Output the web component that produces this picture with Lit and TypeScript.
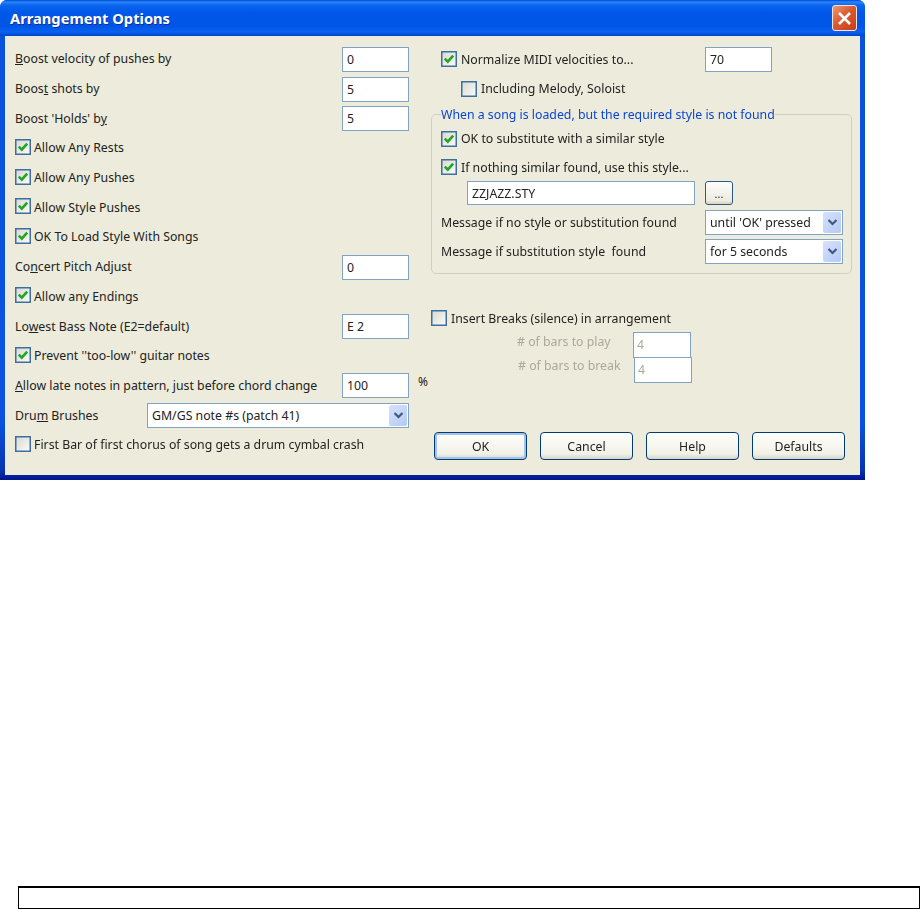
import { LitElement, html, css, svg } from "lit";
import { customElement } from "lit/decorators.js";

const check = svg`<path d="M3.8 7.6 L6.8 10.6 L12.2 4.6" fill="none" stroke="#21a621" stroke-width="2.6"/>`;

@customElement("app-root")
export class AppRoot extends LitElement {
  static styles = css`
    :host { display: block; width: 920px; height: 910px; background: #fff; overflow: hidden;
      font-family: "Noto Sans", sans-serif; font-size: 12.3px; color: #222; }
    .win { width: 865px; height: 480px; box-sizing: border-box; display: flex; flex-direction: column;
      border-radius: 7px 7px 0 0; overflow: hidden;
      background: linear-gradient(#0a52dc, #0a52e0 88%, #0834b0 98%, #00138c);
      filter: blur(0.3px); }
    .title { height: 36px; flex: none; display: flex; align-items: center; justify-content: space-between;
      padding: 0 8px 0 10px; box-sizing: border-box;
      background: linear-gradient(#0048d8 0, #2c86f5 2px, #0a66f0 5px, #0058e8 12px, #0055e5 26px, #0a62f2 32px, #0042c8 36px);
      color: #fff; font-weight: 700; font-size: 14.7px; text-shadow: 1px 1px 0 #0f2f9a; }
    .close { width: 25px; height: 26px; box-sizing: border-box; border: 1px solid #f0e6df; border-radius: 3px;
      background: linear-gradient(135deg, #ec9a76, #dc5a30 45%, #c83c18); display: flex; align-items: center; justify-content: center; }
    .close svg { display: block; }
    .body { flex: none; height: 439px; margin: 0 5px; box-sizing: border-box; background: #edecdc;
      display: flex; padding-top: 8px; }
    .left { width: 423px; flex: none; padding-left: 10px; box-sizing: border-box;
      display: grid; grid-auto-rows: 29.7px; align-content: start; }
    .right { flex: 1; display: flex; flex-direction: column; }
    .row { display: flex; align-items: center; white-space: pre; }
    .lab { width: 327px; flex: none; }
    .lab.drum { width: 132px; }
    .cb { width: 16px; height: 16px; flex: none; box-sizing: border-box; margin: 0 3px 2px 0; display: block; }
    .right .cb { margin: 0 4px 0 0; }
    input { box-sizing: border-box; height: 25px; border: 1px solid #82a3c4; background: #fff; padding: 0 4px;
      font: inherit; color: #222; margin: 0; outline: none; display: block; }
    input.num { width: 67px; margin-top: 1px; }
    .pct { margin-left: 9px; font-size: 12px; margin-top: -8px; }
    .combo { box-sizing: border-box; height: 25px; border: 1px solid #82a3c4; background: #fff; display: flex;
      align-items: center; justify-content: space-between; padding: 0 1px 0 4px; }
    .combo .arrow { width: 18px; height: 21px; border-radius: 2px; display: flex; align-items: center; justify-content: center;
      background: linear-gradient(135deg, #d6e2fb, #b4c9f5); }
    .combo.wide { width: 262px; }
    .combo.small { width: 138px; }
    .r1 { height: 30px; padding-left: 13px; }
    .r1 .lab { width: 244px; }
    .r2 { height: 29px; padding-left: 33px; }
    fieldset { margin: 2px 11px 0 3px; padding: 1px 8px 0 9px; border: 1px solid #d0d0bf; border-radius: 5px;
      height: 169px; box-sizing: border-box; min-width: 0; }
    legend { padding: 2px 0 0; margin-left: 0; color: #0a46d2; line-height: 16px; }
    .g1 { height: 29px; }
    .g1.second { height: 28px; }
    .g-in { gap: 10px; padding-left: 26px; height: 24px; }
    .g-in input { width: 228px; height: 24px; }
    .dots { width: 28px; height: 24px; box-sizing: border-box; border: 1px solid #2a5a8a; border-radius: 3px;
      background: linear-gradient(#fdfdfb, #ecebe0 85%, #d6d0c2); display: flex; align-items: center; justify-content: center; font-size: 11px; }
    .g-c { height: 29px; }
    .g-c .lab { width: 264px; }
    .g-c.first { margin-top: 3px; }
    .ins { margin: 36px 0 0 3px; height: 16px; }
    .bars { color: #aca899; height: 25px; }
    .bars .lab { flex: none; width: 116px; }
    .bars input { width: 58px; height: 26px; color: #aca899; padding-left: 3px; }
    .play { margin-top: 6px; padding-left: 89px; }
    .play .lab { margin-bottom: 6px; }
    .brk { padding-left: 90px; }
    .brk .lab { margin-bottom: 9px; }
    .btns { display: flex; gap: 13px; margin-top: 50px; padding-left: 6px; }
    .btn { width: 93px; height: 28px; box-sizing: border-box; border: 1px solid #003c74; border-radius: 4px;
      background: linear-gradient(#fefefc, #f2f1e8 80%, #d8d3c5); display: flex; align-items: center; justify-content: center; }
    .btn.def { box-shadow: inset 0 0 0 2px #a6c2ec; }
    .note { position: absolute; left: 18px; top: 886px; width: 902px; height: 23px; box-sizing: border-box;
      border: 1px solid #000; border-top-width: 2px; background: #fff; }
  `;

  private cb(on: boolean) {
    return html`<svg class="cb" viewBox="0 0 16 16" aria-hidden="true">
      <defs><linearGradient id="cbg" x1="0" y1="0" x2="1" y2="1"><stop offset="0" stop-color="#d9d9d2"/><stop offset="1" stop-color="#fbfbf9"/></linearGradient></defs>
      <rect x="0.75" y="0.75" width="14.5" height="14.5" fill="url(#cbg)" stroke="#3f6f9f" stroke-width="1.5"/>
      ${on ? check : ""}
    </svg>`;
  }
  private arrow() {
    return html`<span class="arrow"><svg width="11" height="9" viewBox="0 0 11 9"><path d="M1.5 2 L5.5 6 L9.5 2" fill="none" stroke="#41587f" stroke-width="2.2"/></svg></span>`;
  }

  render() {
    return html`
      <div class="win">
        <div class="title"><span>Arrangement Options</span>
          <span class="close"><svg width="15" height="15" viewBox="0 0 15 15"><path d="M2 2 L13 13 M13 2 L2 13" stroke="#fff" stroke-width="2.6"/></svg></span>
        </div>
        <div class="body">
          <div class="left">
            <div class="row"><span class="lab"><u>B</u>oost velocity of pushes by</span><input class="num" .value=${"0"}></div>
            <div class="row"><span class="lab">Boos<u>t</u> shots by</span><input class="num" .value=${"5"}></div>
            <div class="row"><span class="lab">Boost 'Holds' b<u>y</u></span><input class="num" .value=${"5"}></div>
            <div class="row">${this.cb(true)}Allow Any Rests</div>
            <div class="row">${this.cb(true)}Allow Any Pushes</div>
            <div class="row">${this.cb(true)}Allow Style Pushes</div>
            <div class="row">${this.cb(true)}OK To Load Style With Songs</div>
            <div class="row"><span class="lab">Co<u>n</u>cert Pitch Adjust</span><input class="num" .value=${"0"}></div>
            <div class="row">${this.cb(true)}Allow any Endings</div>
            <div class="row"><span class="lab">Lo<u>w</u>est Bass Note (E2=default)</span><input class="num" .value=${"E 2"}></div>
            <div class="row">${this.cb(true)}Prevent ''too-low'' guitar notes</div>
            <div class="row"><span class="lab"><u>A</u>llow late notes in pattern, just before chord change</span><input class="num" .value=${"100"}><span class="pct">%</span></div>
            <div class="row"><span class="lab drum">Dru<u>m</u> Brushes</span><div class="combo wide"><span>GM/GS note #s (patch 41)</span>${this.arrow()}</div></div>
            <div class="row">${this.cb(false)}First Bar of first chorus of song gets a drum cymbal crash</div>
          </div>
          <div class="right">
            <div class="row r1">${this.cb(true)}<span class="lab">Normalize MIDI velocities to...</span><input class="num" .value=${"70"}></div>
            <div class="row r2">${this.cb(false)}Including Melody, Soloist</div>
            <fieldset>
              <legend>When a song is loaded, but the required style is not found</legend>
              <div class="row g1">${this.cb(true)}OK to substitute with a similar style</div>
              <div class="row g1 second">${this.cb(true)}If nothing similar found, use this style...</div>
              <div class="row g-in"><input .value=${"ZZJAZZ.STY"}><span class="dots">...</span></div>
              <div class="row g-c first"><span class="lab">Message if no style or substitution found</span><div class="combo small"><span>until 'OK' pressed</span>${this.arrow()}</div></div>
              <div class="row g-c"><span class="lab">Message if substitution style  found</span><div class="combo small"><span>for 5 seconds</span>${this.arrow()}</div></div>
            </fieldset>
            <div class="row ins">${this.cb(false)}Insert Breaks (silence) in arrangement</div>
            <div class="row bars play"><span class="lab">&#35; of bars to play</span><input .value=${"4"}></div>
            <div class="row bars brk"><span class="lab">&#35; of bars to break</span><input .value=${"4"}></div>
            <div class="btns">
              <div class="btn def">OK</div><div class="btn">Cancel</div><div class="btn">Help</div><div class="btn">Defaults</div>
            </div>
          </div>
        </div>
      </div>
      <div class="note"></div>
    `;
  }
}
